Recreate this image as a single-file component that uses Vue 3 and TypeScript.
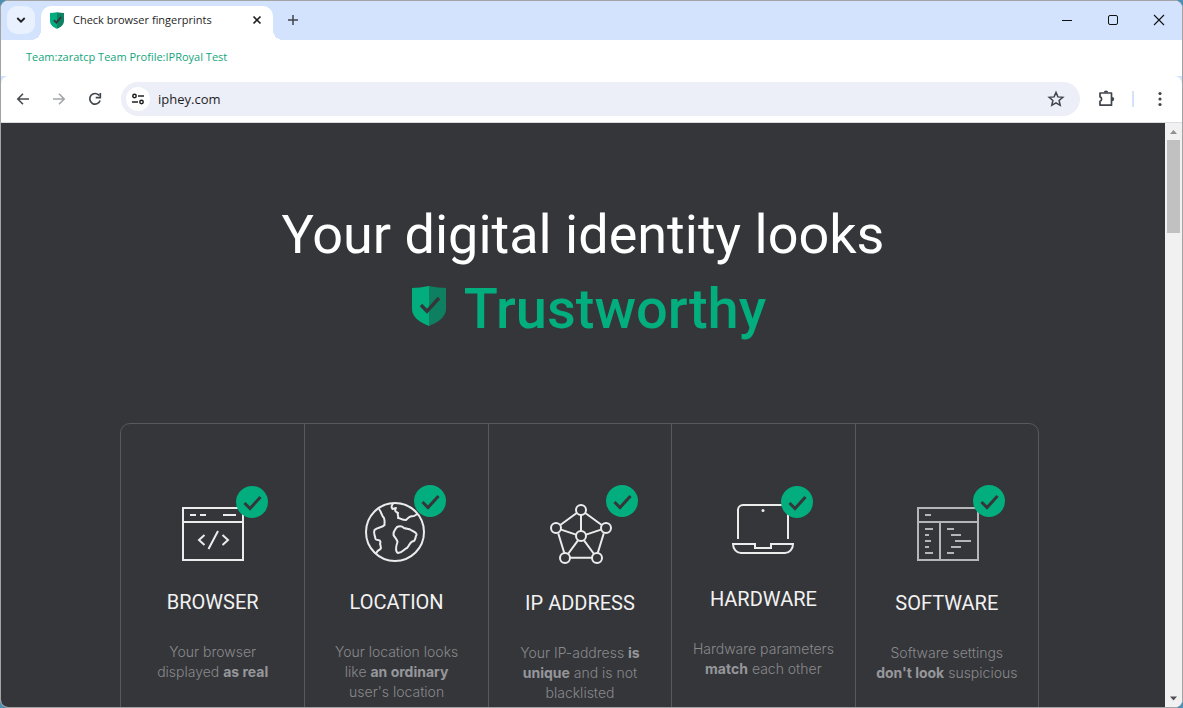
<script setup lang="ts">
import { ref } from 'vue'

type IconName = 'browser' | 'location' | 'ip' | 'hardware' | 'software'

interface Segment {
  text: string
  strong?: boolean
}

interface Card {
  icon: IconName
  title: string
  iconHeight: number
  badgeX: number
  badgeY: number
  lines: Segment[][]
}

const address = ref('iphey.com')

const cards: Card[] = [
  {
    icon: 'browser', title: 'BROWSER', iconHeight: 110, badgeX: 99, badgeY: 22,
    lines: [[{ text: 'Your browser' }], [{ text: 'displayed ' }, { text: 'as real', strong: true }]],
  },
  {
    icon: 'location', title: 'LOCATION', iconHeight: 110, badgeX: 93, badgeY: 21,
    lines: [
      [{ text: 'Your location looks' }],
      [{ text: 'like ' }, { text: 'an ordinary', strong: true }],
      [{ text: "user's location" }],
    ],
  },
  {
    icon: 'ip', title: 'IP ADDRESS', iconHeight: 111, badgeX: 102, badgeY: 21,
    lines: [
      [{ text: 'Your IP-address ' }, { text: 'is', strong: true }],
      [{ text: 'unique', strong: true }, { text: ' and is not' }],
      [{ text: 'blacklisted' }],
    ],
  },
  {
    icon: 'hardware', title: 'HARDWARE', iconHeight: 107, badgeX: 94, badgeY: 22,
    lines: [[{ text: 'Hardware parameters' }], [{ text: 'match', strong: true }, { text: ' each other' }]],
  },
  {
    icon: 'software', title: 'SOFTWARE', iconHeight: 111, badgeX: 102, badgeY: 21,
    lines: [[{ text: 'Software settings' }], [{ text: "don't look", strong: true }, { text: ' suspicious' }]],
  },
]
</script>

<template>
  <div class="desktop">
    <div class="window">
      <header class="tabs">
        <button class="tab-search" aria-label="Search tabs">
          <svg width="12" height="12" viewBox="0 0 12 12"><path d="M2.300 4l3.700 3.700L9.700 4" fill="none" stroke="#1f1f1f" stroke-width="1.800" /></svg>
        </button>
        <div class="tab">
          <svg class="favicon" width="14" height="17" viewBox="0 0 34 40">
            <path d="M17 0C11 1.300 5 1.800 0 2v19c0 9 8 15.500 17 19z" fill="#02ae7e" />
            <path d="M17 0c6 1.300 12 1.800 17 2v19c0 9-8 15.500-17 19z" fill="#0f8263" />
            <path d="M9.500 19l6 6L27 12" fill="none" stroke="#35363a" stroke-width="4.500" />
          </svg>
          <span class="tab-title">Check browser fingerprints</span>
          <button class="tab-close" aria-label="Close tab">
            <svg width="10" height="10" viewBox="0 0 10 10"><path d="M1.500 1.500l7 7M8.500 1.500l-7 7" stroke="#1f1f1f" stroke-width="1.600" /></svg>
          </button>
        </div>
        <button class="new-tab" aria-label="New tab">
          <svg width="12" height="12" viewBox="0 0 12 12"><path d="M6 1v10M1 6h10" stroke="#40454c" stroke-width="1.500" /></svg>
        </button>
        <div class="controls">
          <button aria-label="Minimize"><svg width="12" height="12" viewBox="0 0 12 12"><path d="M1 6.500h10" stroke="#111" /></svg></button>
          <button aria-label="Maximize"><svg width="12" height="12" viewBox="0 0 12 12"><rect x="1.500" y="1.500" width="9" height="9" rx="1.500" fill="none" stroke="#111" /></svg></button>
          <button aria-label="Close"><svg width="12" height="12" viewBox="0 0 12 12"><path d="M1 1l10 10M11 1L1 11" stroke="#111" stroke-width="1.100" /></svg></button>
        </div>
      </header>

      <div class="profile-bar">Team:zaratcp Team Profile:IPRoyal Test</div>

      <div class="toolbar-back">
        <nav class="toolbar">
          <button aria-label="Back">
            <svg width="16" height="16" viewBox="0 0 16 16"><path d="M14 8H3M8 2.800L2.800 8 8 13.200" fill="none" stroke="#474b50" stroke-width="1.600" /></svg>
          </button>
          <button aria-label="Forward">
            <svg width="16" height="16" viewBox="0 0 16 16"><path d="M2 8h11M8 2.800L13.200 8 8 13.200" fill="none" stroke="#a3a5a8" stroke-width="1.600" /></svg>
          </button>
          <button aria-label="Reload">
            <svg width="16" height="16" viewBox="0 0 16 16">
              <path d="M12.300 4.600A5.300 5.300 0 1 0 13.100 9.500" fill="none" stroke="#40454c" stroke-width="1.700" />
              <path d="M13.300 2v4.700H8.700" fill="none" stroke="#40454c" stroke-width="1.700" />
            </svg>
          </button>
          <form class="address" @submit.prevent>
            <button type="button" class="site-info" aria-label="View site information">
              <svg width="14" height="14" viewBox="0 0 14 14">
                <g fill="none" stroke="#1f1f1f" stroke-width="1.500">
                  <circle cx="3.500" cy="4" r="1.700" /><path d="M7 4h6" />
                  <circle cx="10.500" cy="10" r="1.700" /><path d="M1 10h6" />
                </g>
              </svg>
            </button>
            <input v-model="address" type="text" aria-label="Address and search bar">
            <button type="button" class="bookmark" aria-label="Bookmark this tab">
              <svg width="18" height="18" viewBox="0 0 18 18"><path d="M9 2.400l1.900 4.500 4.900.400-3.700 3.200 1.100 4.800L9 12.800l-4.200 2.500 1.100-4.800L2.200 7.300l4.900-.400z" fill="none" stroke="#40454c" stroke-width="1.500" /></svg>
            </button>
          </form>
          <button class="extensions" aria-label="Extensions">
            <svg width="18" height="18" viewBox="0 0 18 18">
              <path d="M3 3h11.500v12.200H3v-3.900a2.300 2.300 0 0 0 0-4.400z" fill="none" stroke="#40454c" stroke-width="1.700" stroke-linejoin="round" />
              <path d="M6.800 2.600a2.200 2.200 0 0 1 4.400 0zM15 6.900a2.200 2.200 0 0 1 0 4.400z" fill="#40454c" />
            </svg>
          </button>
          <span class="divider"></span>
          <button class="menu" aria-label="Browser menu">
            <svg width="4" height="16" viewBox="0 0 4 16" fill="#40454c"><circle cx="2" cy="2.500" r="1.600" /><circle cx="2" cy="8" r="1.600" /><circle cx="2" cy="13.500" r="1.600" /></svg>
          </button>
        </nav>
      </div>

      <div class="viewport">
        <main class="page">
          <h1>
            <span class="lead">Your digital identity looks</span>
            <span class="verdict">
              <svg width="34" height="40" viewBox="0 0 34 40">
                <path d="M17 0C11 1.300 5 1.800 0 2v21c0 8 8 13.500 17 17z" fill="#02ae7e" />
                <path d="M17 0c6 1.300 12 1.800 17 2v21c0 8-8 13.500-17 17z" fill="#0f7f61" />
                <path d="M9 19l6 6.200L27 12" fill="none" stroke="#35363a" stroke-width="3.400" />
              </svg>
              Trustworthy
            </span>
          </h1>

          <section class="cards">
            <article v-for="card in cards" :key="card.title" class="card">
              <svg class="card-icon" width="120" :height="card.iconHeight" :viewBox="`0 0 120 ${card.iconHeight}`" fill="none" stroke="#ebecec" stroke-width="2">
                <g v-if="card.icon === 'browser'">
                  <path d="M30 28h60v52H30zM30 42h60M37 35h6M47 35h6M70 35h13" />
                  <path d="M51.500 55l-5.500 5 5.500 5M65 51l-9.500 18M69.500 55l5.500 5-5.500 5" />
                </g>
                <g v-else-if="card.icon === 'location'" stroke-linejoin="round">
                  <circle cx="58" cy="52" r="29" />
                  <path d="M42 29C45 33 44 35 47 38C48 41 48 42 47.500 45C45 48 41 47 37.500 50C36 53 38 55 38.500 59C40 61 43 59 43.500 62C42 65 45 66 43.500 69C41 70 39.500 72 38.500 74" />
                  <path d="M56 23.500C54.500 26 54 27 55.500 29L59 28C57 31 59 32 61 33C60 35 62 36 61 38C64 38 64 40 69 40C72 37 73 36 77 36L80.500 34" />
                  <path d="M60 47C63 45.500 65 46 67 48C70 49 72 48.500 74 50C77 52 80 52.500 79.500 55C78 57 79 59 77 61C73 61 73 65 70 68C67 69 66 72.500 61 73C58 72 59 66 60.500 62C60 59 58 58 56.500 55C56 51 58 50 60 47z" />
                </g>
                <g v-else-if="card.icon === 'ip'">
                  <path d="M61 35v16M56.700 33L40.300 45M65.300 33l16.400 12M41 49.600l15 5M81 49.600l-15 5M38.200 53.300l6 19.500M83.800 53.300l-6 19.500M49.500 77.800h23M58 60.300L48 74M64 60.300L74 74" />
                  <circle cx="61" cy="30" r="5" /><circle cx="36" cy="48" r="5" /><circle cx="86" cy="48" r="5" />
                  <circle cx="61" cy="56" r="5" /><circle cx="45" cy="78" r="5" /><circle cx="77" cy="78" r="5" />
                </g>
                <g v-else-if="card.icon === 'hardware'">
                  <path d="M35 59V30a5 5 0 0 1 5-5h40a5 5 0 0 1 5 5v29" />
                  <path d="M30 64h22v4h16v-4h22a8 9 0 0 1-8 9H38a8 9 0 0 1-8-9z" />
                  <circle cx="60" cy="30.500" r="1.500" fill="#ebecec" stroke="none" />
                </g>
                <g v-else stroke="#b5b6b7">
                  <path d="M31 28h60v52H31zM31 42h60M53 42v38" />
                  <path d="M38 35h6M38 49h8M38 55h4M38 61h6M38 67h4M38 73h8M60 49h7M64 55h10M68 61h16M64 67h10M60 73h7" />
                </g>
                <g :transform="`translate(${card.badgeX} ${card.badgeY})`">
                  <circle r="16" fill="#02ae7e" stroke="none" />
                  <path d="M-7.500 1l5.500 5.500L8.500-5" stroke="#35363a" stroke-width="3" />
                </g>
              </svg>
              <h2>{{ card.title }}</h2>
              <p>
                <span v-for="(line, i) in card.lines" :key="i" class="line"><template v-for="(part, j) in line" :key="j"><strong v-if="part.strong">{{ part.text }}</strong><template v-else>{{ part.text }}</template></template></span>
              </p>
            </article>
          </section>
        </main>

        <div class="scrollbar" aria-hidden="true">
          <svg width="17" height="17" viewBox="0 0 17 17"><path d="M5 11l3.500-4L12 11z" fill="#8f9092" /></svg>
          <div class="thumb"></div>
          <svg class="down" width="17" height="17" viewBox="0 0 17 17"><path d="M5 6.500l3.500 4 3.500-4z" fill="#505050" /></svg>
        </div>
      </div>
    </div>
  </div>
</template>

<style>
html,
body {
  margin: 0;
  overflow: hidden;
}
</style>

<style scoped>
.desktop {
  height: 100vh;
  background: #4b8fb5;
}

.window {
  display: flex;
  flex-direction: column;
  box-sizing: border-box;
  height: 100%;
  overflow: hidden;
  border: 1px solid #a2a3a5;
  border-radius: 8px;
  background: #fff;
  font-family: "Open Sans", "Noto Sans", sans-serif;
}

button {
  display: flex;
  align-items: center;
  justify-content: center;
  padding: 0;
  border: 0;
  background: none;
}

.tabs {
  display: flex;
  align-items: flex-start;
  height: 39px;
  flex: none;
  padding-left: 6px;
  background: #d3e3fd;
}

.tab-search {
  width: 28px;
  height: 28px;
  margin-top: 5px;
  border-radius: 10px;
  background: #e9f1fe;
}

.tab {
  position: relative;
  display: flex;
  align-items: center;
  box-sizing: border-box;
  width: 232px;
  height: 34px;
  margin: 5px 0 0 6px;
  padding: 0 8px 6px 9px;
  border-radius: 10px 10px 0 0;
  background: #fff;
}

.tab::before,
.tab::after {
  content: "";
  position: absolute;
  bottom: 0;
  width: 10px;
  height: 10px;
}

.tab::before {
  right: 100%;
  background: radial-gradient(circle at 0 0, transparent 10px, #fff 10px);
}

.tab::after {
  left: 100%;
  background: radial-gradient(circle at 100% 0, transparent 10px, #fff 10px);
}

.tab-title {
  flex: 1;
  margin-left: 9px;
  color: #1f1f1f;
  font-size: 11px;
  line-height: 16px;
  white-space: nowrap;
}

.tab-close {
  width: 16px;
  height: 16px;
}

.new-tab {
  width: 28px;
  height: 28px;
  margin: 5px 0 0 6px;
}

.controls {
  display: flex;
  margin-left: auto;
}

.controls button {
  width: 46px;
  height: 38px;
}

.profile-bar {
  flex: none;
  padding-left: 25px;
  color: #14a57c;
  font-size: 11px;
  line-height: 34px;
  height: 36px;
}

.toolbar-back {
  flex: none;
  background: #d3e3fd;
}

.toolbar {
  display: flex;
  align-items: center;
  height: 46px;
  padding: 0 4px;
  border-bottom: 1px solid #dadce0;
  border-radius: 8px 8px 0 0;
  background: #fff;
}

.toolbar > button {
  width: 36px;
  height: 36px;
}

.address {
  display: flex;
  flex: 1;
  align-items: center;
  height: 34px;
  margin: 0 8px;
  border-radius: 17px;
  background: #eceef8;
}

.site-info {
  width: 24px;
  height: 24px;
  margin-left: 5px;
  border-radius: 50%;
  background: #fff;
}

.address input {
  flex: 1;
  min-width: 0;
  margin: 0;
  padding: 0 0 0 8px;
  border: 0;
  outline: 0;
  background: none;
  color: #1f1f1f;
  font: 13px/20px "Open Sans", "Noto Sans", sans-serif;
}

.bookmark {
  width: 28px;
  height: 28px;
  margin-right: 10px;
}

.divider {
  width: 2px;
  height: 16px;
  margin: 0 8px;
  background: #d3e3fd;
}

.viewport {
  display: flex;
  flex: 1;
  min-height: 0;
}

.page {
  flex: 1;
  min-width: 0;
  overflow: hidden;
  background: #35363a;
}

h1 {
  margin: 0;
  padding: 75px 0 77px;
  color: #fff;
  font: 400 54px/74px Roboto, sans-serif;
  text-align: center;
}

.lead {
  display: block;
}

.verdict {
  display: flex;
  align-items: center;
  justify-content: center;
  gap: 18px;
  padding-left: 12px;
  color: #02ae7e;
  font-size: 56px;
  font-weight: 500;
}

.verdict svg {
  margin-bottom: 6px;
}

.cards {
  display: grid;
  grid-template-columns: repeat(5, 1fr);
  min-height: 320px;
  margin: 0 126px 0 119px;
  border: 1px solid #58595d;
  border-radius: 10px;
}

.card {
  padding-top: 56px;
  text-align: center;
}

.card + .card {
  border-left: 1px solid #58595d;
}

.card-icon {
  display: block;
  margin: 0 auto;
}

h2 {
  margin: 0;
  color: #f2f2f2;
  font: 400 20px/24px Roboto, sans-serif;
}

p {
  margin: 28px 0 0;
  color: #88898b;
  font: 300 14px/20px Inter, sans-serif;
}

.line {
  display: block;
  white-space: nowrap;
}

strong {
  color: #96979a;
  font-weight: 700;
}

.scrollbar {
  display: flex;
  flex: none;
  flex-direction: column;
  width: 17px;
  background: #f1f1f1;
}

.thumb {
  height: 93px;
  margin: 0 2px;
  background: #c1c1c1;
}

.down {
  margin-top: auto;
}
</style>
